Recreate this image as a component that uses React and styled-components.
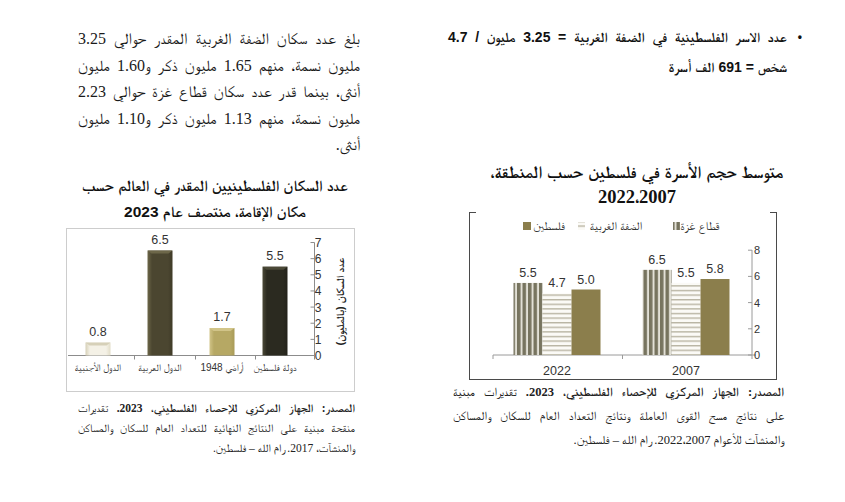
import React from "react";
import styled, { createGlobalStyle } from "styled-components";

const SANS = `"Liberation Sans", "FreeSerif", sans-serif`;
const SERIF = `"Liberation Serif", "FreeSerif", serif`;

const GlobalStyle = createGlobalStyle`
  body {
    margin: 0;
    background: #fff;
    font-family: ${SERIF};
    color: #111;
  }
`;

const Page = styled.div`
  direction: rtl;
  display: flex;
  gap: 60px;
  width: 845px;
  height: 502px;
  padding-right: 40px;
  box-sizing: border-box;
  overflow: hidden;
`;

const Column = styled.section`
  display: flex;
  flex-direction: column;
  width: ${(p) => p.$width}px;
`;

const BulletList = styled.ul`
  list-style: none;
  margin: 22px 0 0;
  padding: 0;
`;

const BulletItem = styled.li`
  display: flex;
  font-family: ${SANS};
  font-weight: bold;
  font-size: 14px;
  line-height: 30px;
  color: #111;
`;

const Bullet = styled.span`
  flex: 0 0 18px;
  padding-right: 3px;
  box-sizing: border-box;
  font-size: 12px;
`;

const BulletText = styled.div`
  flex: 1;
  padding-left: 18px;
`;

const Paragraph = styled.div`
  width: ${(p) => p.$width}px;
  margin: ${(p) => p.$margin};
  font-family: ${SERIF};
  font-size: ${(p) => p.$size}px;
  line-height: ${(p) => p.$lh}px;
  color: #1a1a1a;
`;

const Line = styled.span`
  display: block;
  white-space: nowrap;
  text-align: justify;
  text-align-last: ${(p) => (p.$last ? "start" : "justify")};
`;

const Title = styled.h3`
  margin: ${(p) => p.$margin};
  width: ${(p) => p.$width}px;
  text-align: center;
  font-family: ${SANS};
  font-weight: bold;
  font-size: ${(p) => p.$size}px;
  line-height: ${(p) => p.$lh}px;
  color: #111;
  white-space: nowrap;
`;

const TitleYears = styled.span`
  display: block;
  font-family: ${SERIF};
  font-size: 18.5px;
`;

const ChartBox = styled.div`
  position: relative;
  box-sizing: border-box;
  width: ${(p) => p.$w}px;
  height: ${(p) => p.$h}px;
  margin: ${(p) => p.$margin};
  border: ${(p) => (p.$open ? "1px solid #4a4a4a" : "1.5px solid #cdcdcd")};
  ${(p) => p.$open && "border-top-color: transparent;"}

  svg {
    display: block;
  }

  ${(p) =>
    p.$open &&
    `
    &::before, &::after {
      content: "";
      position: absolute;
      top: -1px;
      width: 7px;
      border-top: 1px solid #4a4a4a;
    }
    &::before { left: -1px; }
    &::after { right: -1px; }
  `}
`;

const Caption = styled(Paragraph)`
  color: #222;

  b {
    font-weight: bold;
  }
`;

/* ---------- right chart: household size ---------- */

const R_BASE = 355;
const R_SCALE = 13.1;
const groups = [
  { year: "2022", x: 513.5, vals: [5.5, 4.7, 5.0] },
  { year: "2007", x: 642.5, vals: [6.5, 5.5, 5.8] },
];
const fills = ["url(#gazaStripes)", "url(#wbStripes)", "#8b7e4c"];

const HouseholdChart = () => (
  <svg width="306" height="166" viewBox="470 213 306 166" fontFamily={SANS}>
    <defs>
      <pattern id="gazaStripes" width="5.5" height="6" patternUnits="userSpaceOnUse">
        <rect width="5.5" height="6" fill="#e2e0d6" />
        <rect width="3.5" height="6" fill="#77745f" />
      </pattern>
      <pattern id="wbStripes" width="6" height="4.6" patternUnits="userSpaceOnUse">
        <rect width="6" height="4.6" fill="#fbfaf6" />
        <rect width="6" height="1.4" fill="#b9b5a3" />
      </pattern>
    </defs>

    {/* legend */}
    <g fontSize="12" fill="#333" textAnchor="middle">
      <text x="700" y="230">قطاع غزة</text>
      <rect x="673" y="222" width="7" height="8" fill="url(#gazaStripes)" />
      <text x="616" y="230">الضفة الغربية</text>
      <rect x="578" y="222" width="7" height="8" fill="url(#wbStripes)" />
      <text x="549" y="230">فلسطين</text>
      <rect x="523" y="222" width="8" height="8" fill="#8b7e4c" />
    </g>

    {/* axes */}
    <g stroke="#9a9a9a" strokeWidth="1">
      <line x1="752" y1="250" x2="752" y2={R_BASE} />
      <line x1="493" y1={R_BASE} x2="756" y2={R_BASE} />
      {[493, 622.5, 752].map((x) => (
        <line key={x} x1={x} y1={R_BASE} x2={x} y2={R_BASE + 4} />
      ))}
      {[0, 2, 4, 6, 8].map((v) => (
        <line key={v} x1="748" y1={R_BASE - v * R_SCALE} x2="752" y2={R_BASE - v * R_SCALE} />
      ))}
    </g>
    <g fontSize="11" fill="#333">
      {[0, 2, 4, 6, 8].map((v) => (
        <text key={v} x="760" y={R_BASE - v * R_SCALE + 4}>
          {v}
        </text>
      ))}
    </g>

    {/* bars */}
    {groups.map((g) => (
      <g key={g.year}>
        {g.vals.map((v, i) => {
          const x = g.x + i * 29;
          const h = v * R_SCALE;
          return (
            <g key={i}>
              <rect x={x} y={R_BASE - h} width="29" height={h} fill={fills[i]} />
              <text x={x + 14.5} y={R_BASE - h - 6} fontSize="12.5" fill="#333" textAnchor="middle">
                {v.toFixed(1)}
              </text>
            </g>
          );
        })}
        <text x={g.x + 43.5} y="375" fontSize="12.5" fill="#333" textAnchor="middle">
          {g.year}
        </text>
      </g>
    ))}
  </svg>
);

/* ---------- left chart: population by residence ---------- */

const L_BASE = 356;
const L_SCALE = 16.14;
const places = [
  { name: "الدول الأجنبية", x: 85, v: 0.8, tone: "foreign" },
  { name: "الدول العربية", x: 147, v: 6.5, tone: "arab" },
  { name: "أراضي 1948", x: 209, v: 1.7, tone: "land48" },
  { name: "دولة فلسطين", x: 262, v: 5.5, tone: "state" },
];
const tones = {
  foreign: ["#d6d0b8", "#f4f1e6", "#e2ddc8"],
  arab: ["#6d6749", "#4b4630", "#3f3a27"],
  land48: ["#d1c488", "#b6a864", "#a99b58"],
  state: ["#4b4937", "#2b2a20", "#23221a"],
};

const PopulationChart = () => (
  <svg width="286" height="161" viewBox="67.5 229.5 286 161" fontFamily={SANS}>
    <defs>
      {Object.entries(tones).map(([k, [edge, mid, dark]]) => (
        <linearGradient key={k} id={`g-${k}`} x1="0" x2="1" y1="0" y2="0">
          <stop offset="0" stopColor={edge} />
          <stop offset="0.18" stopColor={mid} />
          <stop offset="0.82" stopColor={mid} />
          <stop offset="1" stopColor={dark} />
        </linearGradient>
      ))}
    </defs>

    <g stroke="#8c8c8c" strokeWidth="1">
      <line x1="314" y1="243" x2="314" y2={L_BASE} />
      <line x1="67" y1={L_BASE} x2="314" y2={L_BASE} />
      {[67, 134, 195, 255, 314].map((x) => (
        <line key={x} x1={x} y1={L_BASE} x2={x} y2={L_BASE + 4} />
      ))}
      {[0, 1, 2, 3, 4, 5, 6, 7].map((v) => (
        <line key={v} x1="310" y1={L_BASE - v * L_SCALE} x2="314" y2={L_BASE - v * L_SCALE} />
      ))}
    </g>
    <g fontSize="12" fill="#333">
      {[0, 1, 2, 3, 4, 5, 6, 7].map((v) => (
        <text key={v} x="321" y={L_BASE - v * L_SCALE + 4.5}>
          {v}
        </text>
      ))}
    </g>
    <text
      x="343"
      y="302"
      fontSize="11"
      fontWeight="bold"
      fill="#222"
      textAnchor="middle"
      transform="rotate(-90 343 302)"
    >
      عدد السكان (بالمليون)
    </text>

    {places.map((p) => {
      const h = p.v * L_SCALE;
      const top = L_BASE - h;
      const [edge] = tones[p.tone];
      return (
        <g key={p.name}>
          <rect x={p.x} y={top} width="25" height={h} fill={`url(#g-${p.tone})`} />
          <polygon
            points={`${p.x},${top} ${p.x + 25},${top} ${p.x + 21},${top + 3} ${p.x + 4},${top + 3}`}
            fill={edge}
          />
          <text x={p.x + 12.5} y={top - 7} fontSize="12.5" fill="#333" textAnchor="middle">
            {p.v.toFixed(1)}
          </text>
          <text x={p.x + 12.5} y="371" fontSize="10" fill="#333" textAnchor="middle">
            {p.name}
          </text>
        </g>
      );
    })}
  </svg>
);

export default function App() {
  return (
    <>
      <GlobalStyle />
      <Page>
        <Column $width={375}>
          <BulletList>
            <BulletItem>
              <Bullet>•</Bullet>
              <BulletText>
                <Line>عدد الاسر الفلسطينية في الضفة الغربية = 3.25 مليون / 4.7</Line>
                <Line $last>شخص = 691 الف أسرة</Line>
              </BulletText>
            </BulletItem>
          </BulletList>

          <Title $margin="78px 14px 2px 0" $width={308} $size={17.5} $lh={25}>
            متوسط حجم الأسرة في فلسطين حسب المنطقة،
            <TitleYears>2022،2007</TitleYears>
          </Title>

          <ChartBox $open $w={308} $h={168} $margin="0 28px 0 0">
            <HouseholdChart />
          </ChartBox>

          <Caption $width={331} $margin="0 21px 0 0" $size={12.5} $lh={24}>
            <Line>
              <b>المصدر: الجهاز المركزي للإحصاء الفلسطيني، 2023.</b> تقديرات مبنية
            </Line>
            <Line>على نتائج مسح القوى العاملة ونتائج التعداد العام للسكان والمساكن</Line>
            <Line $last>والمنشآت للأعوام 2022،2007. رام الله – فلسطين.</Line>
          </Caption>
        </Column>

        <Column $width={310}>
          <Paragraph $width={282} $margin="26px 10px 0 0" $size={16} $lh={26.5}>
            <Line>بلغ عدد سكان الضفة الغربية المقدر حوالي 3.25</Line>
            <Line>مليون نسمة، منهم 1.65 مليون ذكر و1.60 مليون</Line>
            <Line>أنثى، بينما قدر عدد سكان قطاع غزة حوالي 2.23</Line>
            <Line>مليون نسمة، منهم 1.13 مليون ذكر و1.10 مليون</Line>
            <Line $last>أنثى.</Line>
          </Paragraph>

          <Title $margin="14px 0 3px 0" $width={310} $size={15.5} $lh={26}>
            عدد السكان الفلسطينيين المقدر في العالم حسب
            <br />
            مكان الإقامة، منتصف عام 2023
          </Title>

          <ChartBox $w={289} $h={164} $margin="0 15px 0 0">
            <PopulationChart />
          </ChartBox>

          <Caption $width={277} $margin="6px 15px 0 0" $size={11.5} $lh={20}>
            <Line>
              <b>المصدر: الجهاز المركزي للإحصاء الفلسطيني، 2023.</b> تقديرات
            </Line>
            <Line>منقحة مبنية على النتائج النهائية للتعداد العام للسكان والمساكن</Line>
            <Line $last>والمنشآت، 2017. رام الله – فلسطين.</Line>
          </Caption>
        </Column>
      </Page>
    </>
  );
}
